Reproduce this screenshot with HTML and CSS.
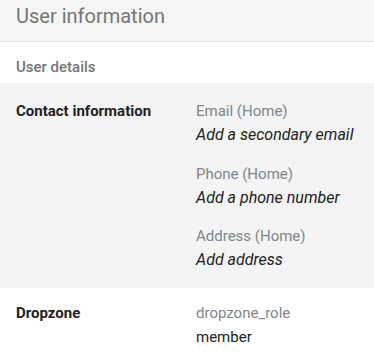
FILE: index.html
```html
<!DOCTYPE html>
<html lang="en">
<head>
    <meta charset="UTF-8">
    <meta name="viewport" content="width=device-width, initial-scale=1.0">
    <title>User information</title>
    <link rel="stylesheet" href="styles.css">
</head>
<body>
    <div class="header">
        <h1>User information</h1>
    </div>

    <div class="subheader">User details</div>

    <div class="section shaded contact">
        <div class="section-label">Contact information</div>
        <div class="fields">
            <div class="field">
                <div class="field-label">Email (Home)</div>
                <div class="field-value empty">Add a secondary email</div>
            </div>
            <div class="field">
                <div class="field-label">Phone (Home)</div>
                <div class="field-value empty">Add a phone number</div>
            </div>
            <div class="field">
                <div class="field-label">Address (Home)</div>
                <div class="field-value empty">Add address</div>
            </div>
        </div>
    </div>

    <div class="section dropzone">
        <div class="section-label">Dropzone</div>
        <div class="fields">
            <div class="field">
                <div class="field-label">dropzone_role</div>
                <div class="field-value">member</div>
            </div>
        </div>
    </div>
</body>
</html>
```

FILE: styles.css
```css
body {
    font-family: Roboto, 'Noto Sans', sans-serif;
    font-size: 15px;
    margin: 0;
    background-color: #ffffff;
    color: #212121;
}
.header {
    background-color: #f5f5f5;
    border-bottom: 1px solid #e0e0e0;
    padding: 4px 16px 13px;
}
h1 {
    margin: 0;
    font-size: 20px;
    font-weight: 400;
    line-height: 24px;
    color: #757575;
}
.subheader {
    padding: 15px 16px 6px;
    line-height: 20px;
    font-weight: 500;
    color: #757575;
}
.section {
    display: flex;
    padding: 0 16px;
    line-height: 22px;
}
.shaded {
    background-color: #f4f4f4;
}
.contact {
    padding-top: 17px;
    padding-bottom: 17px;
}
.dropzone {
    padding-top: 14px;
}
.section-label {
    width: 180px;
    flex-shrink: 0;
    font-weight: 700;
    color: #212121;
}
.fields {
    display: flex;
    flex-direction: column;
    gap: 16.5px;
}
.field-label {
    color: #80868b;
}
.field-value {
    margin-top: 2px;
    color: #212121;
}
.field-value.empty {
    font-size: 16px;
    font-style: italic;
}
```
